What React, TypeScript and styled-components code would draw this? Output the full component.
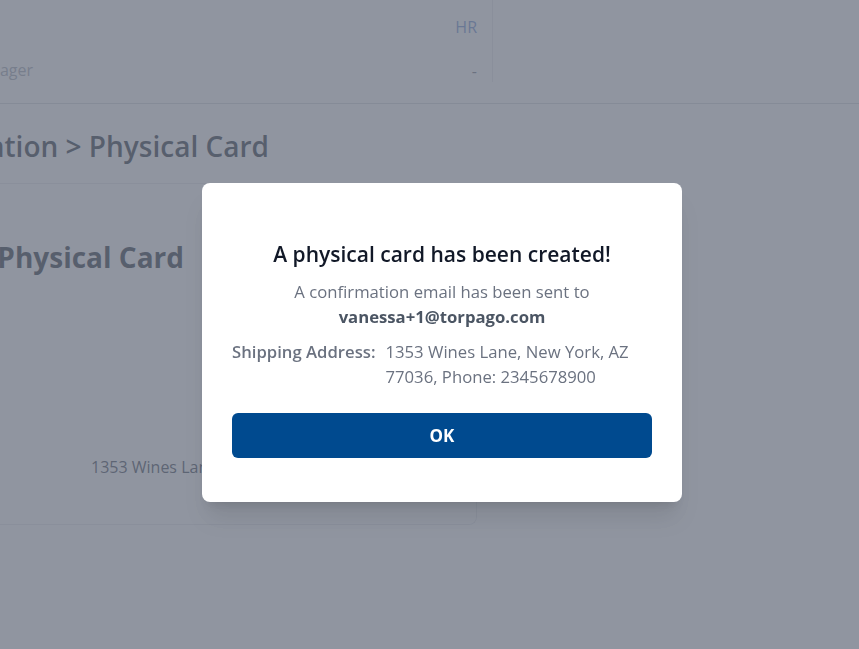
import React from 'react';
import styled, { createGlobalStyle } from 'styled-components';

const COLOR = {
  white: '#ffffff',
  gray200: '#e5e7eb',
  gray300: '#d1d5db',
  gray400: '#9ca3af',
  gray500: '#6b7280',
  gray600: '#4b5563',
  gray700: '#374151',
  gray800: '#1f2937',
  gray900: '#111827',
  link: '#6a8bd0',
  primary: '#004a8f'
};

const GlobalStyle = createGlobalStyle`
  body {
    margin: 0;
    overflow: hidden;
    background: ${COLOR.white};
    font-family: "Open Sans", "Noto Sans", "Liberation Sans", sans-serif;
  }
`;

const S = {
  Page: styled.div`
    display: flex;
    flex-direction: column;
    width: 859px;
    height: 649px;
    background: ${COLOR.white};
  `,
  TopSection: styled.div`
    display: flex;
    height: 103px;
    border-bottom: 1px solid ${COLOR.gray300};
  `,
  Details: styled.div`
    display: flex;
    flex-direction: column;
    width: 493px;
    height: 82px;
    box-sizing: border-box;
    padding: 6px 15px 0 0;
    border-right: 1px solid ${COLOR.gray200};
  `,
  DetailRow: styled.div<{ $h: number }>`
    display: flex;
    justify-content: space-between;
    align-items: center;
    height: ${(p) => p.$h}px;
    flex-shrink: 0;
    font-size: 16px;
  `,
  DetailValue: styled.span<{ $link?: boolean }>`
    color: ${(p) => (p.$link ? COLOR.link : COLOR.gray500)};
  `,
  Content: styled.div`
    display: flex;
    flex-direction: column;
    width: 477px;
  `,
  Breadcrumb: styled.div`
    height: 80px;
    display: flex;
    align-items: center;
    padding-top: 6px;
    box-sizing: border-box;
    border-bottom: 1px solid ${COLOR.gray200};
  `,
  // anchors the end of a line of text, its start runs off the left edge
  ClipText: styled.div<{ $end: number; $size: number; $weight: number; $color?: string }>`
    display: flex;
    justify-content: flex-end;
    width: ${(p) => p.$end}px;
    white-space: nowrap;
    font-size: ${(p) => p.$size}px;
    line-height: 1.35;
    font-weight: ${(p) => p.$weight};
    color: ${(p) => p.$color ?? COLOR.gray800};
  `,
  Card: styled.div`
    display: flex;
    flex-direction: column;
    height: 341px;
    box-sizing: border-box;
    padding: 55px 0 45px;
    border-right: 1px solid ${COLOR.gray200};
    border-bottom: 1px solid ${COLOR.gray200};
    border-radius: 0 0 8px 0;
  `,
  CardBody: styled.div`
    flex: 1;
  `,
  AddressRow: styled.div`
    display: flex;
    padding-left: 91px;
    font-size: 16px;
    line-height: 24px;
    color: ${COLOR.gray700};
    white-space: nowrap;
    overflow: hidden;
  `,
  Overlay: styled.div`
    position: fixed;
    inset: 0;
    display: flex;
    justify-content: center;
    align-items: flex-start;
    padding: 183px 0 0 25px;
    background: rgba(107, 114, 128, 0.75);
  `,
  Modal: styled.div`
    display: flex;
    flex-direction: column;
    width: 480px;
    box-sizing: border-box;
    padding: 57px 30px 44px;
    background: ${COLOR.white};
    border-radius: 8px;
    box-shadow: 0 20px 25px -5px rgba(0, 0, 0, 0.1), 0 8px 10px -6px rgba(0, 0, 0, 0.1);
  `,
  Title: styled.h3`
    margin: 0 0 11px;
    font-size: 21px;
    line-height: 28px;
    font-weight: 600;
    text-align: center;
    color: ${COLOR.gray900};
  `,
  Text: styled.p`
    margin: 0;
    font-size: 16.7px;
    line-height: 25px;
    text-align: center;
    color: ${COLOR.gray500};
  `,
  Email: styled.strong`
    display: block;
    font-weight: 700;
    color: ${COLOR.gray600};
  `,
  Shipping: styled.div`
    display: flex;
    gap: 10px;
    margin-top: 10px;
    font-size: 16.7px;
    line-height: 25px;
    color: ${COLOR.gray500};
  `,
  ShippingLabel: styled.span`
    flex-shrink: 0;
    font-weight: 600;
  `,
  Button: styled.button`
    height: 45px;
    margin-top: 24px;
    border: none;
    border-radius: 6px;
    background: ${COLOR.primary};
    color: ${COLOR.white};
    font-family: inherit;
    font-size: 17px;
    font-weight: 700;
    cursor: pointer;
  `
};

const App = () => {
  return (
    <>
      <GlobalStyle />
      <S.Page>
        <S.TopSection>
          <S.Details>
            <S.DetailRow $h={42}>
              <span />
              <S.DetailValue $link>HR</S.DetailValue>
            </S.DetailRow>
            <S.DetailRow $h={45}>
              <S.ClipText $end={33} $size={16} $weight={400} $color={COLOR.gray400}>
                Reporting Manager
              </S.ClipText>
              <S.DetailValue>-</S.DetailValue>
            </S.DetailRow>
          </S.Details>
        </S.TopSection>

        <S.Content>
          <S.Breadcrumb>
            <S.ClipText $end={269} $size={28} $weight={600}>
              Card Application &gt; Physical Card
            </S.ClipText>
          </S.Breadcrumb>

          <S.Card>
            <S.ClipText $end={184} $size={28} $weight={700}>
              Physical Card
            </S.ClipText>
            <S.CardBody />
            <S.AddressRow>1353 Wines Lane, New York, AZ 77036</S.AddressRow>
          </S.Card>
        </S.Content>
      </S.Page>

      <S.Overlay>
        <S.Modal>
          <S.Title>A physical card has been created!</S.Title>
          <S.Text>
            A confirmation email has been sent to
            <S.Email>vanessa+1@torpago.com</S.Email>
          </S.Text>
          <S.Shipping>
            <S.ShippingLabel>Shipping Address:</S.ShippingLabel>
            <span>1353 Wines Lane, New York, AZ 77036, Phone: 2345678900</span>
          </S.Shipping>
          <S.Button>OK</S.Button>
        </S.Modal>
      </S.Overlay>
    </>
  );
};

export default App;
